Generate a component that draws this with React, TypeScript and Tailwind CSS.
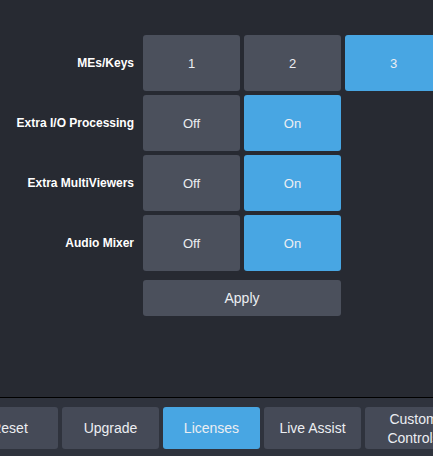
const rows = [
  { label: "MEs/Keys", options: ["1", "2", "3"], active: 2 },
  { label: "Extra I/O Processing", options: ["Off", "On"], active: 1 },
  { label: "Extra MultiViewers", options: ["Off", "On"], active: 1 },
  { label: "Audio Mixer", options: ["Off", "On"], active: 1 },
];

const tabs = [
  { label: "Reset" },
  { label: "Upgrade" },
  { label: "Licenses", active: true },
  { label: "Live Assist" },
  { label: "Custom Controls" },
];

const font = { fontFamily: '"Liberation Sans", Arial, sans-serif' };

function OptionButton({ label, active }: { label: string; active?: boolean }) {
  return (
    <button
      className={`flex h-[56px] w-[97px] shrink-0 items-center justify-center rounded-[3px] pt-[1px] text-[13px] text-[#eceef2] ${active ? "bg-[#48a6e3]" : "bg-[#4b505c]"}`}
    >
      {label}
    </button>
  );
}

export default function App() {
  return (
    <div className="flex h-[456px] w-[433px] flex-col overflow-hidden bg-[#272a32]" style={font}>
      <main className="flex flex-1 flex-col gap-[4px] pt-[35px]">
        {rows.map((row) => (
          <div className="flex items-center" key={row.label}>
            <div className="w-[143px] shrink-0 pr-[9px] text-right text-[12px] font-bold text-white">{row.label}</div>
            <div className="flex gap-[4px]">
              {row.options.map((opt, i) => (
                <OptionButton active={i === row.active} key={opt} label={opt} />
              ))}
            </div>
          </div>
        ))}
        <div className="mt-[5px] flex pl-[143px]">
          <button className="h-[36px] w-[198px] rounded-[3px] bg-[#4b505c] pt-[1px] text-[14px] text-[#eceef2]">Apply</button>
        </div>
      </main>
      <footer className="h-[59px] shrink-0 border-t border-black bg-[#2f333d] pt-[9px]">
        <div className="ml-[-39px] flex gap-[4px]">
          {tabs.map((tab) => (
            <button
              className={`flex h-[42px] w-[97px] shrink-0 items-center justify-center rounded-[3px] px-1 pt-[1px] text-[14px] leading-[19px] text-[#eceef2] ${tab.active ? "bg-[#48a6e3]" : "bg-[#454a57]"}`}
              key={tab.label}
            >
              {tab.label}
            </button>
          ))}
        </div>
      </footer>
    </div>
  );
}
